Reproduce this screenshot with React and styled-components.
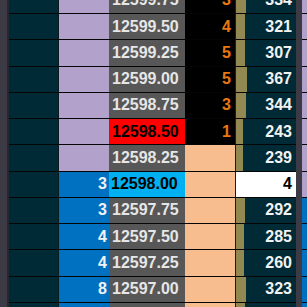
import React from 'react';
import styled, { createGlobalStyle } from 'styled-components';

const GlobalStyle = createGlobalStyle`
  html, body {
    margin: 0;
    padding: 0;
    background: #3b3a45;
  }
  body {
    font-family: "Liberation Sans", Arial, sans-serif;
  }
`;

const rows = [
  { price: '12599.75', ask: 3, vol: 334 },
  { price: '12599.50', ask: 4, vol: 321 },
  { price: '12599.25', ask: 5, vol: 307 },
  { price: '12599.00', ask: 5, vol: 367 },
  { price: '12598.75', ask: 3, vol: 344 },
  { price: '12598.50', ask: 1, vol: 243, mark: 'last' },
  { price: '12598.25', vol: 239 },
  { price: '12598.00', bid: 3, vol: 4, mark: 'inside' },
  { price: '12597.75', bid: 3, vol: 292 },
  { price: '12597.50', bid: 4, vol: 285 },
  { price: '12597.25', bid: 4, vol: 260 },
  { price: '12597.00', bid: 8, vol: 323 },
  { price: '12596.75', bid: 6, vol: 301 },
];

const Screen = styled.div`
  display: flex;
  width: 307px;
  height: 307px;
  overflow: hidden;
`;

const LeftRail = styled.div`
  width: 7px;
  flex: none;
  background: #3b3a45;
  border-right: 2px solid #27262d;
`;

const Ladder = styled.div`
  flex: 1;
  display: flex;
  flex-direction: column;
  margin-top: -12.25px;
`;

const Row = styled.div`
  display: grid;
  grid-template-columns: 50px 50px 76px 51px 60px 6px 5px;
  height: 26.25px;
  flex: none;
`;

const Cell = styled.div`
  display: flex;
  align-items: center;
  justify-content: ${(p) => (p.$left ? 'flex-start' : 'flex-end')};
  box-sizing: border-box;
  border-bottom: 1px solid #050505;
  font-size: 16px;
  font-weight: bold;
  overflow: hidden;
  white-space: nowrap;
`;

const Account = styled(Cell)`
  background: #002b36;
  border-right: 1px solid #0b1a1f;
`;

const BidCell = styled(Cell)`
  background: ${(p) => (p.$bid ? '#0070c0' : '#b1a1cb')};
  color: #f2f2f2;
  padding-right: 2px;
`;

const priceBg = { last: '#ff0000', inside: '#00b0f0' };

const PriceCell = styled(Cell)`
  background: ${(p) => priceBg[p.$mark] || '#575757'};
  color: ${(p) => (p.$mark ? '#000' : '#e6e6e6')};
  padding-left: ${(p) => (p.$mark === 'inside' ? '2px' : '3px')};
`;

const AskCell = styled(Cell)`
  background: ${(p) => (p.$ask ? '#000' : '#f8bd8e')};
  color: #e8780f;
  padding-right: 4px;
  border-right: 1px solid #1c1c1c;
`;

const VolumeCell = styled(Cell)`
  justify-content: stretch;
  background: ${(p) => (p.$hot ? '#fff' : '#002b36')};
`;

const VolBar = styled.div`
  align-self: stretch;
  background: #928852;
  flex: none;
`;

const VolText = styled.span`
  flex: 1;
  text-align: right;
  padding-right: 4px;
  color: ${(p) => (p.$hot ? '#000' : '#f2f2f2')};
`;

const Rail = styled.div`
  background: #3b3a45;
`;

const Next = styled(Cell)`
  background: ${(p) => (p.$bid ? '#0070c0' : '#b1a1cb')};
`;

function LadderRow({ r, i }) {
  const hot = r.mark === 'inside';
  const bidSide = i >= 7;
  return (
    <Row>
      <Account />
      <BidCell $bid={r.bid != null}>{r.bid}</BidCell>
      <PriceCell $left $mark={r.mark}>{r.price}</PriceCell>
      <AskCell $ask={r.ask != null}>{r.ask}</AskCell>
      <VolumeCell $hot={hot}>
        {!hot && <VolBar style={{ width: Math.round(r.vol / 34) }} />}
        <VolText $hot={hot}>{r.vol}</VolText>
      </VolumeCell>
      <Rail />
      <Next $bid={i >= 8 && bidSide} />
    </Row>
  );
}

export default function App() {
  return (
    <>
      <GlobalStyle />
      <Screen>
        <LeftRail />
        <Ladder>
          {rows.map((r, i) => (
            <LadderRow key={r.price} r={r} i={i} />
          ))}
        </Ladder>
      </Screen>
    </>
  );
}
